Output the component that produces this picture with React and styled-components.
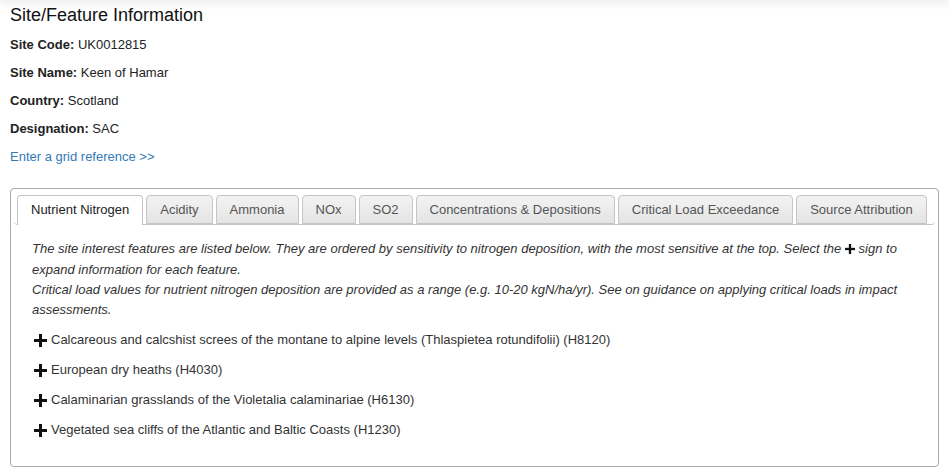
import styled, { createGlobalStyle } from "styled-components";

const GlobalStyle = createGlobalStyle`
  html, body {
    margin: 0;
    padding: 0;
    background: #fff;
  }
  body {
    font-family: "Liberation Sans", Arial, sans-serif;
    font-size: 13px;
    color: #333;
  }
`;

const TopShadow = styled.div`
  height: 0;
  box-shadow: 0 0 8px 2px rgba(0, 0, 0, 0.14);
`;

const Page = styled.div`
  padding: 4px 10px 0;
`;

const Title = styled.h1`
  margin: 0 0 10px;
  font-size: 18px;
  line-height: 22px;
  font-weight: normal;
  color: #111;
`;

const InfoRow = styled.p`
  margin: 0 0 10px;
  line-height: 18px;
  color: #222;
  b {
    font-weight: bold;
  }
`;

const GridLink = styled.a`
  display: block;
  line-height: 18px;
  color: #337ab7;
  text-decoration: none;
  cursor: pointer;
`;

const TabPanel = styled.div`
  margin-top: 22px;
  border: 1px solid #aaa;
  border-radius: 4px;
  padding: 6px 3px 16px;
  height: 279px;
  box-sizing: border-box;
`;

const TabNav = styled.ul`
  list-style: none;
  margin: 0;
  padding: 0 0 0 3px;
  display: flex;
  border-bottom: 1px solid #c5c5c5;
  border-radius: 0 0 4px 4px;
`;

const Tab = styled.li`
  margin: 0 3px -1px 0;
  padding: 0 13px;
  height: ${(p) => (p.$active ? "30px" : "29px")};
  line-height: 28px;
  border: 1px solid #c5c5c5;
  border-bottom: ${(p) => (p.$active ? "none" : "1px solid #c5c5c5")};
  border-radius: 4px 4px 0 0;
  background: ${(p) =>
    p.$active ? "#fff" : "linear-gradient(#f3f3f3, #e4e4e4)"};
  color: ${(p) => (p.$active ? "#222" : "#555")};
  white-space: nowrap;
  cursor: pointer;
  box-sizing: border-box;
`;

const Content = styled.div`
  padding: 14px 18px 0;
`;

const Intro = styled.p`
  margin: 0 0 10px;
  font-style: italic;
  line-height: 20px;
  color: #333;
`;

const Feature = styled.div`
  display: flex;
  align-items: center;
  gap: 4px;
  padding-left: 2px;
  line-height: 20px;
  margin-bottom: 10px;
  color: #333;
  cursor: pointer;
`;

const PlusIcon = ({ size = 13 }) => (
  <svg width={size} height={size} viewBox="0 0 13 13" style={{ flexShrink: 0 }}>
    <rect x="0" y="5" width="13" height="3" fill="#111" />
    <rect x="5" y="0" width="3" height="13" fill="#111" />
  </svg>
);

const InlinePlus = styled.span`
  display: inline-block;
  vertical-align: -1px;
`;

const tabs = [
  "Nutrient Nitrogen",
  "Acidity",
  "Ammonia",
  "NOx",
  "SO2",
  "Concentrations & Depositions",
  "Critical Load Exceedance",
  "Source Attribution",
];

const features = [
  "Calcareous and calcshist screes of the montane to alpine levels (Thlaspietea rotundifolii) (H8120)",
  "European dry heaths (H4030)",
  "Calaminarian grasslands of the Violetalia calaminariae (H6130)",
  "Vegetated sea cliffs of the Atlantic and Baltic Coasts (H1230)",
];

export default function App() {
  return (
    <>
      <GlobalStyle />
      <TopShadow />
      <Page>
        <Title>Site/Feature Information</Title>
        <InfoRow>
          <b>Site Code:</b> UK0012815
        </InfoRow>
        <InfoRow>
          <b>Site Name:</b> Keen of Hamar
        </InfoRow>
        <InfoRow>
          <b>Country:</b> Scotland
        </InfoRow>
        <InfoRow>
          <b>Designation:</b> SAC
        </InfoRow>
        <GridLink>Enter a grid reference &gt;&gt;</GridLink>

        <TabPanel>
          <TabNav>
            {tabs.map((t, i) => (
              <Tab key={t} $active={i === 0}>
                {t}
              </Tab>
            ))}
          </TabNav>
          <Content>
            <Intro>
              The site interest features are listed below. They are ordered by
              sensitivity to nitrogen deposition, with the most sensitive at the
              top. Select the{" "}
              <InlinePlus>
                <PlusIcon size={10} />
              </InlinePlus>{" "}
              sign to expand information for each feature.
              <br />
              Critical load values for nutrient nitrogen deposition are provided
              as a range (e.g. 10-20 kgN/ha/yr). See on guidance on applying
              critical loads in impact assessments.
            </Intro>
            {features.map((f) => (
              <Feature key={f}>
                <PlusIcon />
                <span>{f}</span>
              </Feature>
            ))}
          </Content>
        </TabPanel>
      </Page>
    </>
  );
}
